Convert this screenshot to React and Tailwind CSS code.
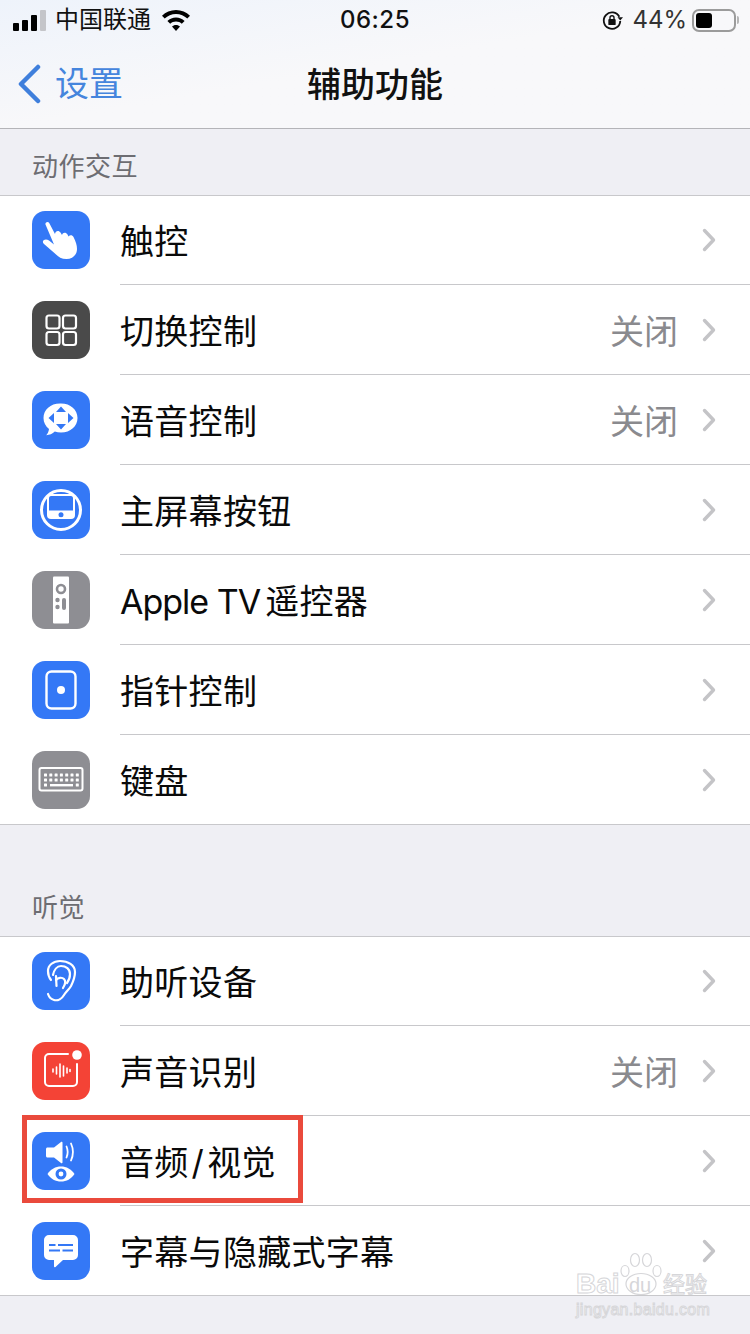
const FONT = 'Inter, "Noto Sans CJK SC", "Liberation Sans", sans-serif'

function HandIcon() {
  return (
    <svg viewBox="0 0 58 58" className="w-full h-full">
      <path fill="#fff" d="M13.500 13.500c-.7-2 2.500-3.500 3.700-1.500L23 23c.3-3.500 4-4 5.500-1.500l1.500 2.500c.8-3 4-3 5.500-.5l1 2c1.500-2 4-1.500 5 .5 2.500 5 3.500 8 3.500 12 0 6-4.500 10-10.500 10-5 0-8-2-11-5L12 33c-1.500-1.500-1.500-3.500 0-4 1.500-1 3.500-.5 5 .5l5 4z" />
    </svg>
  )
}

function GridIcon() {
  return (
    <svg viewBox="0 0 58 58" className="w-full h-full" fill="none" stroke="#fff" strokeWidth="2.200">
      <rect x="14.500" y="14.500" width="13" height="13" rx="2.500" />
      <rect x="31" y="14.500" width="13" height="13" rx="2.500" />
      <rect x="14.500" y="31" width="13" height="13" rx="2.500" />
      <rect x="31" y="31" width="13" height="13" rx="2.500" />
    </svg>
  )
}

function VoiceIcon() {
  return (
    <svg viewBox="0 0 58 58" className="w-full h-full">
      <path fill="#fff" d="M29 12.500c9.600 0 16.500 6.300 16.500 14.500S38.600 41.500 29 41.500c-2.300 0-4.300-.3-6.200-1-2.300 2.300-5.300 3.500-8.600 3.700 1.500-1.700 2.500-3.700 2.800-6.300-3.500-2.600-5.500-6.500-5.500-10.900 0-8.200 6.900-14.500 16.500-14.500z" />
      <path fill="#3478f6" d="M29 15.500l5 5.500H24zM29 38.500l-5-5.500h10zM16.500 27l5.500-5v10zM41.500 27l-5.500 5V22z" />
    </svg>
  )
}

function HomeButtonIcon() {
  return (
    <svg viewBox="0 0 58 58" className="w-full h-full">
      <circle cx="29" cy="29" r="19.500" fill="none" stroke="#fff" strokeWidth="3" />
      <path fill="#fff" d="M15 29.500h28V34a4 4 0 0 1-4 4H19a4 4 0 0 1-4-4z" />
      <path fill="none" stroke="#fff" strokeWidth="2" d="M16 30V17a3 3 0 0 1 3-3h20a3 3 0 0 1 3 3v13" />
      <circle cx="29" cy="33.700" r="2.500" fill="#3478f6" />
    </svg>
  )
}

function RemoteIcon() {
  return (
    <svg viewBox="0 0 58 58" className="w-full h-full">
      <rect x="21" y="5.500" width="16" height="47" rx="1" fill="#fff" />
      <circle cx="29" cy="18" r="4" fill="none" stroke="#8e8e93" strokeWidth="2.600" />
      <circle cx="25.500" cy="29" r="2.200" fill="#8e8e93" />
      <circle cx="25.500" cy="36" r="2.200" fill="#8e8e93" />
      <rect x="30" y="27" width="4" height="12" rx="2" fill="#8e8e93" />
    </svg>
  )
}

function PointerIcon() {
  return (
    <svg viewBox="0 0 58 58" className="w-full h-full">
      <rect x="14.500" y="10.500" width="29" height="37" rx="5" fill="none" stroke="#fff" strokeWidth="2.400" />
      <circle cx="29" cy="29" r="4" fill="#fff" />
    </svg>
  )
}

function KeyboardIcon() {
  const keys = []
  for (let r = 0; r < 2; r++) {
    for (let c = 0; c < 7; c++) {
      keys.push(<rect key={`${r}-${c}`} x={12 + c * 5.300} y={22.500 + r * 5} width="3" height="3" rx="0.500" fill="#fff" />)
    }
  }
  return (
    <svg viewBox="0 0 58 58" className="w-full h-full">
      <rect x="7.500" y="17" width="43" height="22.500" rx="2" fill="none" stroke="#fff" strokeWidth="2" />
      {keys}
      <rect x="12" y="32.500" width="3" height="3" rx="0.500" fill="#fff" />
      <rect x="43.800" y="32.500" width="3" height="3" rx="0.500" fill="#fff" />
      <rect x="18" y="33" width="23" height="2.400" fill="#fff" />
    </svg>
  )
}

function EarIcon() {
  return (
    <svg viewBox="0 0 58 58" className="w-full h-full" fill="none" stroke="#fff" strokeWidth="2.200" strokeLinecap="round">
      <path d="M19 28c-2-2.500-3-5.500-3-9 0-6 5.500-10 12-10 8 0 15 4 15 11 0 6-2 10-4 14-2 3.500-5 5.500-7 9-2 3.500-6 6-10 5-3-.7-5-3-6-6" />
      <path d="M21 23c1-5 4-9 8-9 5 0 9 3 9 8 0 4-1.500 7-3 9" />
      <path d="M24 24l.5 10" />
      <path d="M24 28c2-2.500 6-3 8-1 2 2 1.500 5-1 9" />
    </svg>
  )
}

function SoundIcon() {
  return (
    <svg viewBox="0 0 58 58" className="w-full h-full" fill="none" stroke="#fff" strokeLinecap="round">
      <path strokeWidth="2" d="M36 12H17a4 4 0 0 0-4 4v24a4 4 0 0 0 4 4h24a4 4 0 0 0 4-4V22" />
      <path strokeWidth="1.600" d="M21 27v3M24.500 25v7M28 22v13M31.500 24v10M35 26v5M38 27.500v2" />
      <circle cx="45" cy="13" r="4.800" fill="#fff" stroke="none" />
    </svg>
  )
}

function AudioVisualIcon() {
  return (
    <svg viewBox="0 0 58 58" className="w-full h-full">
      <path fill="#fff" d="M15.500 15.500h6.500l7-5.500c.8-.5 1.500 0 1.500.8v19.400c0 .8-.7 1.300-1.500.8l-7-5.500h-6.500c-.8 0-1.500-.6-1.500-1.500v-7c0-.9.700-1.500 1.500-1.500z" />
      <path fill="none" stroke="#fff" strokeWidth="1.800" strokeLinecap="round" d="M34.500 14.500c1.500 3.500 1.500 7.500 0 11M39 11.500c2.500 5.500 2.500 11.500 0 17" />
      <path fill="#fff" d="M15.500 42c3.300-5 8-7.500 13.500-7.500S39.200 37 42.500 42c-3.300 5-8 7.500-13.500 7.500S18.800 47 15.500 42z" />
      <circle cx="29" cy="42" r="5.500" fill="#3478f6" />
      <circle cx="29" cy="42" r="2.400" fill="#fff" />
    </svg>
  )
}

function CaptionIcon() {
  return (
    <svg viewBox="0 0 58 58" className="w-full h-full">
      <path fill="#fff" d="M17 13h24a5 5 0 0 1 5 5v15a5 5 0 0 1-5 5H31l-7.500 7c-.8.700-1.500.3-1.500-.7V38h-5a5 5 0 0 1-5-5V18a5 5 0 0 1 5-5z" />
      <path stroke="#3478f6" strokeWidth="1.800" d="M17 23h6.500M26 23h15M17 28.500h11M30.500 28.500h10.500" />
    </svg>
  )
}

const MOTION_ROWS = [
  { label: '触控', bg: 'bg-[#3478f6]', icon: <HandIcon /> },
  { label: '切换控制', value: '关闭', bg: 'bg-[#4a4a4a]', icon: <GridIcon /> },
  { label: '语音控制', value: '关闭', bg: 'bg-[#3478f6]', icon: <VoiceIcon /> },
  { label: '主屏幕按钮', bg: 'bg-[#3478f6]', icon: <HomeButtonIcon /> },
  { label: <><span className="tracking-[-1px]">Apple TV</span><span className="ml-[5px]">遥控器</span></>, bg: 'bg-[#8e8e93]', icon: <RemoteIcon /> },
  { label: '指针控制', bg: 'bg-[#3478f6]', icon: <PointerIcon /> },
  { label: '键盘', bg: 'bg-[#8e8e93]', icon: <KeyboardIcon /> },
]

const HEARING_ROWS = [
  { label: '助听设备', bg: 'bg-[#3478f6]', icon: <EarIcon /> },
  { label: '声音识别', value: '关闭', bg: 'bg-[#f44336]', icon: <SoundIcon /> },
  { label: <>音频<span className="mx-[3px]">/</span>视觉</>, bg: 'bg-[#3478f6]', icon: <AudioVisualIcon /> },
  { label: '字幕与隐藏式字幕', bg: 'bg-[#3478f6]', icon: <CaptionIcon /> },
]

function Chevron() {
  return (
    <svg viewBox="0 0 14 24" className="w-[14px] h-[24px] shrink-0" fill="none" stroke="#c4c4c7" strokeWidth="3.400" strokeLinecap="round" strokeLinejoin="round">
      <path d="M2.500 2.500 11.500 12l-9 9.500" />
    </svg>
  )
}

function Row({ row, first, last }) {
  return (
    <div className={`flex items-center pl-8 ${first || last ? 'h-[89px]' : 'h-[90px]'}`}>
      <div className={`w-[58px] h-[58px] rounded-[13px] shrink-0 ${row.bg} ${first ? 'mb-[1px]' : ''} ${last ? 'mt-[1px]' : ''}`}>{row.icon}</div>
      <div className={`ml-[30px] flex-1 h-full flex items-center pr-[34px] ${last ? '' : 'border-b border-[#c8c8cb]'}`}>
        <span className="flex-1 mt-[3px] text-[34px] tracking-[0.3px] text-[#0a0a0a]">{row.label}</span>
        {row.value && <span className="mt-[3px] text-[34px] text-[#8a8a8e] mr-[24px]">{row.value}</span>}
        <Chevron />
      </div>
    </div>
  )
}

function Section({ title, rows, headerClass }) {
  return (
    <div>
      <div className={`px-8 flex items-end text-[26px] tracking-[0.5px] text-[#6d6d72] ${headerClass}`}>{title}</div>
      <div className="bg-white border-y border-[#c8c8cb]">
        {rows.map((row, i) => (
          <Row key={i} row={row} first={i === 0} last={i === rows.length - 1} />
        ))}
      </div>
    </div>
  )
}

function StatusBar() {
  return (
    <div className="h-[40px] relative flex items-center justify-between pl-[13px] pr-[11px] text-[#111]">
      <div className="flex items-center">
        <div className="flex items-end gap-[3px] h-[21px] mt-[1px]">
          <span className="w-[6px] h-[8px] bg-black rounded-[1px]" />
          <span className="w-[6px] h-[11px] bg-black rounded-[1px]" />
          <span className="w-[6px] h-[16px] bg-black rounded-[1px]" />
          <span className="w-[6px] h-[21px] bg-[#c4c5c9] rounded-[1px]" />
        </div>
        <span className="ml-[9px] text-[24px] leading-none">中国联通</span>
        <svg viewBox="0 0 30 24" className="w-[30px] h-[24px] ml-[10px]">
          <path fill="#000" d="M15 2C9.500 2 4.700 4.200 1 7.800l2.700 2.800C6.700 7.700 10.600 6 15 6s8.300 1.700 11.300 4.600L29 7.800C25.300 4.200 20.500 2 15 2z" />
          <path fill="#000" d="M15 9.500c-3.300 0-6.300 1.300-8.600 3.500l2.800 2.800c1.500-1.400 3.500-2.300 5.800-2.300s4.300.9 5.800 2.300l2.800-2.800c-2.300-2.200-5.300-3.500-8.600-3.500z" />
          <path fill="#000" d="M15 17c-1.600 0-3 .6-4 1.600l4 4.400 4-4.400c-1-1-2.400-1.600-4-1.600z" />
        </svg>
      </div>
      <span className="absolute left-0 right-0 text-center text-[24px] font-medium tracking-[0.5px] leading-none">06:25</span>
      <div className="flex items-center">
        <svg viewBox="0 0 24 24" className="w-[22px] h-[22px]">
          <path fill="none" stroke="#111" strokeWidth="2" d="M20 8.500A9 9 0 1 0 21 13" />
          <path fill="#111" d="M18 9h6l-3 3.500z" />
          <rect x="8" y="11" width="8" height="6.500" rx="1" fill="#111" />
          <path fill="none" stroke="#111" strokeWidth="1.500" d="M9.800 11V9.500a2.200 2.200 0 0 1 4.400 0V11" />
        </svg>
        <span className="ml-[9px] text-[24px] leading-none text-[#333]">44%</span>
        <div className="ml-[5px] w-[44px] h-[23px] border-2 border-[#9b9b9b] rounded-[7px] p-[2px]">
          <div className="w-[16px] h-full bg-black rounded-[3px]" />
        </div>
        <span className="ml-[1px] w-[2px] h-[8px] bg-[#b5b5b5] rounded-r-sm" />
      </div>
    </div>
  )
}

function Watermark() {
  const outline = 'text-white [-webkit-text-stroke:1px_#d6d6d9]'
  return (
    <div className="absolute left-[576px] top-[1252px] w-[136px] h-[68px] pointer-events-none">
      <span className={`absolute left-0 top-[18px] text-[28px] leading-none font-bold font-['Liberation_Sans'] ${outline}`}>Bai</span>
      <svg viewBox="0 0 42 44" className="absolute left-[44px] top-0 w-[42px] h-[44px]" fill="#fff" stroke="#d6d6d9" strokeWidth="1.200">
        <ellipse cx="21" cy="32" rx="15" ry="10.500" />
        <ellipse cx="15" cy="8" rx="4.500" ry="6.500" />
        <ellipse cx="27" cy="8" rx="4.500" ry="6.500" />
        <ellipse cx="5" cy="19" rx="4" ry="5.500" />
        <ellipse cx="37" cy="19" rx="4" ry="5.500" />
      </svg>
      <span className="absolute left-[53px] top-[23px] text-[20px] leading-none font-['Liberation_Sans'] text-[#d6d6d9]">du</span>
      <span className={`absolute left-[87px] top-[21px] text-[22px] leading-none ${outline}`}>经验</span>
      <span className={`absolute left-0 top-[50px] text-[16px] leading-none tracking-[0.3px] font-['Liberation_Sans'] ${outline}`}>jingyan.baidu.com</span>
    </div>
  )
}

export default function App() {
  return (
    <div className="relative w-[750px] h-[1334px] overflow-hidden bg-[#efeff4]" style={{ fontFamily: FONT }}>
      <div className="h-[129px] border-b border-[#b4b4b8] bg-gradient-to-br from-[#eef3fb] via-[#f8f8fa] to-[#f8f8fa]">
        <StatusBar />
        <div className="relative h-[88px] flex items-center justify-center">
          <div className="absolute left-[16px] top-[24px] flex items-center">
            <svg viewBox="0 0 26 40" className="w-[26px] h-[40px]" fill="none" stroke="#3f7fdc" strokeWidth="4.500" strokeLinecap="round" strokeLinejoin="round">
              <path d="M22 3 5 20l17 17" />
            </svg>
            <span className="ml-[13px] text-[34px] leading-[40px] text-[#4585dd]">设置</span>
          </div>
          <span className="text-[34px] font-medium text-[#111]">辅助功能</span>
        </div>
      </div>

      <Section title="动作交互" rows={MOTION_ROWS} headerClass="h-[66px] pb-[9px]" />
      <Section title="听觉" rows={HEARING_ROWS} headerClass="h-[111px] pb-[9px]" />

      {/* red annotation box */}
      <div className="absolute left-[22px] top-[1115px] w-[281px] h-[88px] border-[5px] border-[#ea4a3c]" />
      <Watermark />
    </div>
  )
}
